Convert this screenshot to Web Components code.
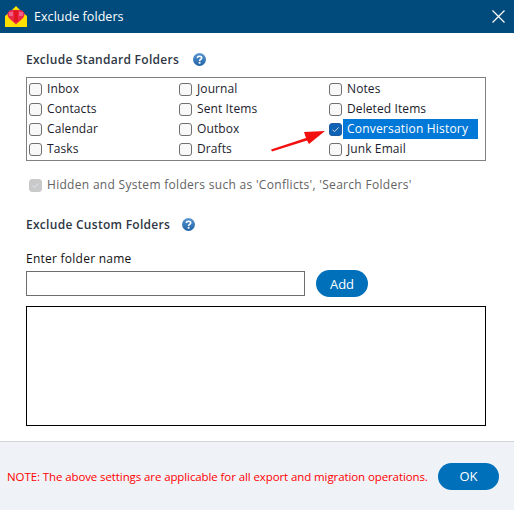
<!DOCTYPE html>
<html>
<head>
<meta charset="utf-8">
<title>Exclude folders</title>
<style>
  html, body { margin: 0; padding: 0; background: #fff; }
  body { font-family: "Open Sans", "Noto Sans", sans-serif; font-size: 12px; color: #1c1c2c; overflow: hidden; }
</style>
</head>
<body>
<exclude-dialog heading="Exclude folders"></exclude-dialog>

<script>
class HelpIcon extends HTMLElement {
  constructor() {
    super();
    this.attachShadow({ mode: "open" });
    this.shadowRoot.innerHTML = `
      <style>
        :host { display: inline-flex; width: 13px; height: 13px; }
        svg { display: block; }
      </style>
      <svg width="13" height="13" viewBox="0 0 13 13">
        <defs>
          <linearGradient id="g" x1="0" y1="0" x2="0" y2="1">
            <stop offset="0" stop-color="#5a97d2"/>
            <stop offset="1" stop-color="#1f62a6"/>
          </linearGradient>
        </defs>
        <circle cx="6.5" cy="6.5" r="6.5" fill="url(#g)"/>
        <path d="M4.4 5 C4.4 2.6 8.7 2.6 8.7 5 C8.7 6.5 6.6 6.4 6.6 8" fill="none" stroke="#fff" stroke-width="1.6"/>
        <rect x="5.7" y="8.9" width="1.8" height="1.8" fill="#fff"/>
      </svg>`;
  }
}
customElements.define("help-icon", HelpIcon);

class FolderCheck extends HTMLElement {
  constructor() {
    super();
    this.attachShadow({ mode: "open" });
  }

  connectedCallback() {
    const checked = this.hasAttribute("checked");
    const selected = this.hasAttribute("selected");
    const disabled = this.hasAttribute("disabled");
    this.shadowRoot.innerHTML = `
      <style>
        :host { display: flex; align-items: center; height: 20px; }
        .box {
          width: 13px; height: 13px; box-sizing: border-box; flex: none;
          border: 1px solid #707070; border-radius: 3px; background: #f8f8f8;
          display: flex; align-items: center; justify-content: center;
        }
        .box.checked { background: #0f62b4; border-color: #1a5da3; }
        .box.disabled { background: #c9c9c9; border-color: #c9c9c9; }
        .label { margin-left: 5px; padding: 0 10px 0 0; line-height: 20px; white-space: nowrap; letter-spacing: 0.1px; }
        .label.selected {
          margin-left: 1px; padding: 0 10px 0 4px; width: 121px;
          background: #0078d7; color: #fff; height: 20px; letter-spacing: 0.2px;
        }
        .label.disabled { margin-left: 5px; color: #636363; letter-spacing: 0.3px; }
        svg { display: block; }
      </style>
      <span class="box ${checked ? "checked" : ""} ${disabled ? "disabled" : ""}">
        ${checked ? `<svg width="9" height="9" viewBox="0 0 9 9"><path d="M1.5 4.8 L3.6 6.6 L7.6 2.4" fill="none" stroke="#dfe9f4" stroke-width="0.9"/></svg>` : ""}
      </span>
      <span class="label ${selected ? "selected" : ""} ${disabled ? "disabled" : ""}"><slot></slot></span>`;
  }
}
customElements.define("folder-check", FolderCheck);

class PillButton extends HTMLElement {
  constructor() {
    super();
    this.attachShadow({ mode: "open" });
    this.shadowRoot.innerHTML = `
      <style>
        :host {
          display: inline-flex; align-items: center; justify-content: center;
          height: 27px; border-radius: 14px; background: #0070bb; color: #fff;
          font-size: 13px; flex: none;
        }
      </style>
      <slot></slot>`;
  }
}
customElements.define("pill-button", PillButton);

class TitleBar extends HTMLElement {
  constructor() {
    super();
    this.attachShadow({ mode: "open" });
  }

  connectedCallback() {
    this.shadowRoot.innerHTML = `
      <style>
        :host {
          display: flex; align-items: center; height: 33px; box-sizing: border-box;
          padding: 0 9px 0 5px; background: #004b7c; color: #fff; font-size: 12.5px;
        }
        .logo { display: block; flex: none; }
        .text { margin-left: 7px; flex: 1; letter-spacing: 0.05px; }
        .close { display: block; flex: none; }
      </style>
      <svg class="logo" width="22" height="22" viewBox="0 0 22 22">
        <path d="M0 10 L6 5 L11 0 L16 5 L22 10 L22 21 L0 21 Z" fill="#ffe000"/>
        <path d="M11 5 C13 3 19.5 3.5 19.5 8.5 C19.5 12 15 14.5 11 18.5 C7 14.5 2.5 12 2.5 8.5 C2.5 3.5 9 3 11 5 Z" fill="#e8294a"/>
        <rect x="4" y="6" width="4" height="4" fill="#f2608a"/>
        <rect x="14" y="6" width="4" height="4" fill="#f2608a"/>
        <rect x="9" y="4" width="4" height="12" fill="#e3131f"/>
      </svg>
      <span class="text"><slot></slot></span>
      <svg class="close" width="13" height="13" viewBox="0 0 13 13">
        <path d="M0.5 0.5 L12.5 12.5 M12.5 0.5 L0.5 12.5" stroke="#fff" stroke-width="1.2" fill="none"/>
      </svg>`;
  }
}
customElements.define("title-bar", TitleBar);

class ExcludeDialog extends HTMLElement {
  constructor() {
    super();
    this.attachShadow({ mode: "open" });
  }

  connectedCallback() {
    const columns = [
      ["Inbox", "Contacts", "Calendar", "Tasks"],
      ["Journal", "Sent Items", "Outbox", "Drafts"],
      ["Notes", "Deleted Items", "Conversation History", "Junk Email"],
    ];
    // read across the rows, the grid fills row by row
    let cells = "";
    for (let row = 0; row < 4; row++) {
      for (let col = 0; col < 3; col++) {
        const name = columns[col][row];
        const on = name === "Conversation History";
        cells += `<folder-check ${on ? "checked selected" : ""}>${name}</folder-check>`;
      }
    }

    this.shadowRoot.innerHTML = `
      <style>
        :host { display: flex; flex-direction: column; width: 514px; height: 510px; position: relative; }
        .content { flex: 1; padding: 17px 28px 0 26px; }
        .heading {
          display: flex; align-items: center; height: 18px;
          font-weight: 600; color: #2f3745; font-size: 12px; letter-spacing: 0.28px;
        }
        .heading help-icon { margin-left: 14px; }
        .folders {
          display: grid; grid-template-columns: 150px 150px 1fr;
          margin-top: 9px; height: 84px; box-sizing: border-box;
          border: 1px solid #808080; padding: 1px 0 1px 2px;
        }
        .hidden-row { margin-top: 14px; margin-left: 3px; }
        .custom { margin-top: 20px; }
        .custom help-icon { margin-left: 12px; }
        .enter { margin-top: 17px; line-height: 18px; color: #111; letter-spacing: 0.25px; }
        .add-row { display: flex; align-items: center; gap: 11px; margin-top: 2px; }
        .name {
          width: 279px; height: 25px; box-sizing: border-box;
          border: 1px solid #6e6e6e; background: #fff;
        }
        .add-row pill-button { width: 52px; }
        .list {
          margin-top: 9px; height: 120px; box-sizing: border-box;
          border: 1px solid #000; background: #fff;
        }
        .footer {
          height: 69px; box-sizing: border-box; border-top: 1px solid #d2d5da;
          background: #eff2f7; display: flex; align-items: center;
          padding: 0 15px 0 7px; justify-content: space-between;
        }
        .note { color: #ff0000; font-size: 11.5px; white-space: nowrap; letter-spacing: -0.1px; }
        .footer pill-button { width: 61px; }
        .arrow { position: absolute; left: 270px; top: 129px; display: block; }
      </style>
      <title-bar>${this.getAttribute("heading")}</title-bar>
      <div class="content">
        <div class="heading">Exclude Standard Folders<help-icon></help-icon></div>
        <div class="folders">${cells}</div>
        <folder-check class="hidden-row" checked disabled>Hidden and System folders such as 'Conflicts', 'Search Folders'</folder-check>
        <div class="heading custom">Exclude Custom Folders<help-icon></help-icon></div>
        <div class="enter">Enter folder name</div>
        <div class="add-row">
          <div class="name"></div>
          <pill-button>Add</pill-button>
        </div>
        <div class="list"></div>
      </div>
      <div class="footer">
        <span class="note">NOTE: The above settings are applicable for all export and migration operations.</span>
        <pill-button>OK</pill-button>
      </div>
      <svg class="arrow" width="56" height="24" viewBox="0 0 56 24">
        <path d="M1 20.5 L36 9 L34 3 L55 2 L39 15 L37 11.5 L2 22.5 Z" fill="#f40f0f"/>
      </svg>`;
  }
}
customElements.define("exclude-dialog", ExcludeDialog);
</script>
</body>
</html>
